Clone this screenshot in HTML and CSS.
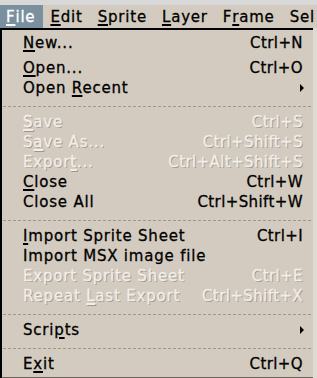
FILE: index.html
```html
<!DOCTYPE html>
<html lang="en">
<head>
    <meta charset="UTF-8">
    <title>File menu</title>
    <link rel="stylesheet" href="styles.css">
</head>
<body>
    <div class="top-strip"></div>

    <nav class="menubar">
        <span class="bar-item active"><u>F</u>ile</span>
        <span class="bar-item"><u>E</u>dit</span>
        <span class="bar-item"><u>S</u>prite</span>
        <span class="bar-item"><u>L</u>ayer</span>
        <span class="bar-item">F<u>r</u>ame</span>
        <span class="bar-item">Sel</span>
    </nav>

    <div class="menu">
        <div class="item first"><span><u>N</u>ew...</span><span class="key">Ctrl+N</span></div>
        <div class="item"><span><u>O</u>pen...</span><span class="key">Ctrl+O</span></div>
        <div class="item"><span>Open <u>R</u>ecent</span><span class="arrow"></span></div>
        <div class="sep"></div>
        <div class="item disabled"><span><u>S</u>ave</span><span class="key">Ctrl+S</span></div>
        <div class="item disabled"><span>S<u>a</u>ve As...</span><span class="key">Ctrl+Shift+S</span></div>
        <div class="item disabled"><span>Expor<u>t</u>...</span><span class="key">Ctrl+Alt+Shift+S</span></div>
        <div class="item"><span><u>C</u>lose</span><span class="key">Ctrl+W</span></div>
        <div class="item"><span>Close All</span><span class="key">Ctrl+Shift+W</span></div>
        <div class="sep"></div>
        <div class="item"><span><u>I</u>mport Sprite Sheet</span><span class="key">Ctrl+I</span></div>
        <div class="item"><span>Import MSX image file</span></div>
        <div class="item disabled"><span>Export Sprite Sheet</span><span class="key">Ctrl+E</span></div>
        <div class="item disabled"><span>Repeat <u>L</u>ast Export</span><span class="key">Ctrl+Shift+X</span></div>
        <div class="sep"></div>
        <div class="item"><span>Scri<u>p</u>ts</span><span class="arrow"></span></div>
        <div class="sep"></div>
        <div class="item"><span>E<u>x</u>it</span><span class="key">Ctrl+Q</span></div>
    </div>
</body>
</html>
```

FILE: styles.css
```css
body {
    margin: 0;
    background-color: #dedad4;
    font-family: "DejaVu Sans", sans-serif;
    font-size: 15px;
    letter-spacing: 0.8px;
    color: #000;
    -webkit-text-stroke: 0.3px currentColor;
    width: 317px;
    height: 378px;
    overflow: hidden;
}

u {
    text-decoration-thickness: 2px;
    text-underline-offset: 2px;
}

.top-strip {
    height: 5px;
    background-color: #d8d8d8;
}

.menubar {
    display: flex;
    height: 23px;
    background-color: #d3cbbf;
    white-space: nowrap;
}

.bar-item {
    display: flex;
    align-items: center;
    padding: 0 8px 0 6px;
    margin-right: 1px;
}

.bar-item.active {
    background-color: #7b909e;
    color: #fff;
}

.menu {
    width: 311px;
    background-color: #d3cbbf;
    border-top: 2px solid #000;
    border-left: 2px solid #000;
    border-bottom: 3px solid #6e6259;
    padding: 3px 0 3px;
}

.item {
    display: flex;
    justify-content: space-between;
    align-items: center;
    height: 20px;
    padding: 0 10px 0 21px;
    white-space: nowrap;
}

.item.first {
    margin-bottom: 5px;
}

.item.disabled {
    color: #f2eee8;
    text-shadow: 1px 1px 0 #a1968c;
}

.key {
    letter-spacing: 0.4px;
}

.arrow {
    width: 0;
    height: 0;
    border-top: 4px solid transparent;
    border-bottom: 4px solid transparent;
    border-left: 4px solid #000;
    margin-right: -1px;
}

.sep {
    height: 1px;
    margin: 8px 2px 5px 1px;
    background-image: repeating-linear-gradient(to right, #a39689 0 3px, transparent 3px 5px);
}
```
